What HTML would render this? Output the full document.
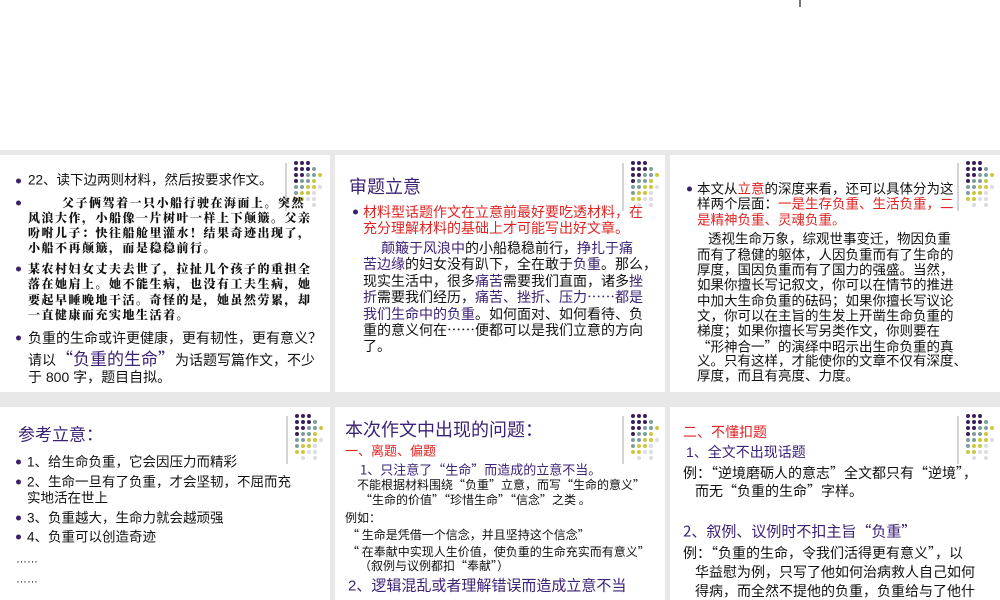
<!DOCTYPE html>
<html><head><meta charset="utf-8"><style>
body{margin:0;width:1000px;height:600px;overflow:hidden;background:#fff;position:relative;font-family:"Liberation Sans","Noto Sans CJK SC",sans-serif;color:#111}
.band{position:absolute;left:0;top:150px;width:1000px;height:450px;background:#e8e8e8}
.s{position:absolute;background:#fff;overflow:hidden}
.l{position:absolute;white-space:nowrap;line-height:1;transform:translateY(-50%)}
.c{font-family:"Noto Sans CJK SC","Liberation Sans",sans-serif}
.b{position:absolute;width:5px;height:5px;border-radius:50%;background:#3a1f6b;transform:translateY(-50%)}
.p{color:#3c2275}.r{color:#e02424}
.m{font-family:"Noto Serif CJK SC","Noto Sans CJK SC",serif;font-weight:900;font-size:12px;letter-spacing:1.5px}
</style></head><body>
<div style="position:absolute;left:799px;top:0;width:2px;height:7px;background:#777"></div>
<div class="band"></div>
<div class="s" style="left:0;top:155px;width:330px;height:237px"></div>
<div class="s" style="left:335px;top:155px;width:330px;height:237px"></div>
<div class="s" style="left:670px;top:155px;width:330px;height:237px"></div>
<div class="s" style="left:0;top:407px;width:330px;height:193px"></div>
<div class="s" style="left:335px;top:407px;width:330px;height:193px"></div>
<div class="s" style="left:670px;top:407px;width:330px;height:193px"></div>

<svg width="1000" height="600" style="position:absolute;left:0;top:0">
<defs><g id="d">
<line x1="-8" y1="2" x2="-8" y2="50" stroke="#aaa" stroke-width="1"/>
<g fill="#3a1f5c"><circle cx="2" cy="2" r="2"/><circle cx="8" cy="2" r="2"/><circle cx="14" cy="2" r="2"/><circle cx="2" cy="8" r="2"/><circle cx="8" cy="8" r="2"/><circle cx="14" cy="8" r="2"/><circle cx="2" cy="14" r="2"/><circle cx="8" cy="14" r="2"/><circle cx="2" cy="20" r="2"/></g>
<g fill="#7d9e9c"><circle cx="20" cy="8" r="2"/><circle cx="14" cy="14" r="2"/><circle cx="20" cy="14" r="2"/><circle cx="8" cy="20" r="2"/><circle cx="14" cy="20" r="2"/><circle cx="2" cy="26" r="2"/><circle cx="8" cy="26" r="2"/><circle cx="2" cy="32" r="2"/></g>
<g fill="#c9c83e"><circle cx="26" cy="14" r="2"/><circle cx="20" cy="20" r="2"/><circle cx="14" cy="26" r="2"/><circle cx="20" cy="26" r="2"/><circle cx="8" cy="32" r="2"/><circle cx="14" cy="32" r="2"/><circle cx="2" cy="38" r="2"/><circle cx="8" cy="38" r="2"/></g>
<g fill="#dcdce4"><circle cx="26" cy="26" r="2"/><circle cx="20" cy="32" r="2"/><circle cx="14" cy="38" r="2"/><circle cx="20" cy="38" r="2"/><circle cx="8" cy="44" r="2"/><circle cx="20" cy="44" r="2"/></g>
</g></defs>
<use href="#d" x="294" y="161"/><use href="#d" x="631" y="161"/><use href="#d" x="966" y="161"/>
<use href="#d" x="295" y="414"/><use href="#d" x="631" y="414"/><use href="#d" x="966" y="414"/>
</svg>

<!-- slide1 -->
<div class="b" style="left:16px;top:181px"></div>
<div class="l" style="left:28px;top:180px;font-size:13.5px">22、读下边两则材料，然后按要求作文。</div>
<div class="b" style="left:16px;top:203px"></div>
<div class="l m" style="left:62px;top:203px">父子俩驾着一只小船行驶在海面上。突然</div>
<div class="l m" style="left:28px;top:218px">风浪大作，小船像一片树叶一样上下颠簸。父亲</div>
<div class="l m" style="left:28px;top:233px">吩咐儿子：快往船舱里灌水！结果奇迹出现了，</div>
<div class="l m" style="left:28px;top:248px">小船不再颠簸，而是稳稳前行。</div>
<div class="b" style="left:16px;top:269px"></div>
<div class="l m" style="left:28px;top:269px">某农村妇女丈夫去世了，拉扯几个孩子的重担全</div>
<div class="l m" style="left:28px;top:284px">落在她肩上。她不能生病，也没有工夫生病，她</div>
<div class="l m" style="left:28px;top:300px">要起早睡晚地干活。奇怪的是，她虽然劳累，却</div>
<div class="l m" style="left:28px;top:315px">一直健康而充实地生活着。</div>
<div class="b" style="left:16px;top:338px"></div>
<div class="l" style="left:28px;top:338px;font-size:14px">负重的生命或许更健康，更有韧性，更有意义？</div>
<div class="l" style="left:28px;top:358px;font-size:14px">请以<span class="p c" style="font-size:17px">“负重的生命”</span>为话题写篇作文，不少</div>
<div class="l" style="left:28px;top:377px;font-size:14px">于 800 字，题目自拟。</div>

<!-- slide2 -->
<div class="l p" style="left:349px;top:187px;font-size:18px">审题立意</div>
<div class="b" style="left:353px;top:212px"></div>
<div class="l r" style="left:363px;top:212px;font-size:14px">材料型话题作文在立意前最好要吃透材料，在</div>
<div class="l r" style="left:363px;top:228px;font-size:14px">充分理解材料的基础上才可能写出好文章。</div>
<div class="l" style="left:381px;top:248px;font-size:14px"><span class="p">颠簸于风浪中</span>的小船稳稳前行，<span class="p">挣扎于痛</span></div>
<div class="l" style="left:363px;top:264px;font-size:14px"><span class="p">苦边缘</span>的妇女没有趴下，全在敢于<span class="p">负重</span>。那么，</div>
<div class="l" style="left:363px;top:281px;font-size:14px">现实生活中，很多<span class="p">痛苦</span>需要我们直面，诸多<span class="p">挫</span></div>
<div class="l c" style="left:363px;top:297px;font-size:14px"><span class="p">折</span>需要我们经历，<span class="p">痛苦、挫折、压力……都是</span></div>
<div class="l" style="left:363px;top:314px;font-size:14px"><span class="p">我们生命中的负重</span>。如何面对、如何看待、负</div>
<div class="l c" style="left:363px;top:330px;font-size:14px">重的意义何在……便都可以是我们立意的方向</div>
<div class="l" style="left:363px;top:346px;font-size:14px">了。</div>

<!-- slide3 -->
<div class="b" style="left:687px;top:189px"></div>
<div class="l" style="left:697px;top:189px;font-size:13.5px">本文从<span class="r">立意</span>的深度来看，还可以具体分为这</div>
<div class="l" style="left:697px;top:204px;font-size:13.5px">样两个层面：<span class="r">一是生存负重、生活负重，二</span></div>
<div class="l r" style="left:697px;top:220px;font-size:13.5px">是精神负重、灵魂负重。</div>
<div class="l" style="left:708px;top:239px;font-size:13.5px">透视生命万象，综观世事变迁，物因负重</div>
<div class="l" style="left:697px;top:255px;font-size:13.5px">而有了稳健的躯体，人因负重而有了生命的</div>
<div class="l" style="left:697px;top:270px;font-size:13.5px">厚度，国因负重而有了国力的强盛。当然，</div>
<div class="l" style="left:697px;top:285px;font-size:13.5px">如果你擅长写记叙文，你可以在情节的推进</div>
<div class="l" style="left:697px;top:301px;font-size:13.5px">中加大生命负重的砝码；如果你擅长写议论</div>
<div class="l" style="left:697px;top:316px;font-size:13.5px">文，你可以在主旨的生发上开凿生命负重的</div>
<div class="l" style="left:697px;top:331px;font-size:13.5px">梯度；如果你擅长写另类作文，你则要在</div>
<div class="l c" style="left:697px;top:346px;font-size:13.5px">“形神合一”的演绎中昭示出生命负重的真</div>
<div class="l" style="left:697px;top:361px;font-size:13.5px">义。只有这样，才能使你的文章不仅有深度、</div>
<div class="l" style="left:697px;top:376px;font-size:13.5px">厚度，而且有亮度、力度。</div>

<!-- slide4 -->
<div class="l p" style="left:18px;top:435px;font-size:17px">参考立意：</div>
<div class="b" style="left:16px;top:462px"></div>
<div class="l" style="left:27px;top:462px;font-size:13.5px">1、给生命负重，它会因压力而精彩</div>
<div class="b" style="left:16px;top:482px"></div>
<div class="l" style="left:27px;top:482px;font-size:13.5px">2、生命一旦有了负重，才会坚韧，不屈而充</div>
<div class="l" style="left:27px;top:498px;font-size:13.5px">实地活在世上</div>
<div class="b" style="left:16px;top:518px"></div>
<div class="l" style="left:27px;top:518px;font-size:13.5px">3、负重越大，生命力就会越顽强</div>
<div class="b" style="left:16px;top:537px"></div>
<div class="l" style="left:27px;top:537px;font-size:13.5px">4、负重可以创造奇迹</div>
<div class="l" style="left:16px;top:560px;font-size:11px">……</div>
<div class="l" style="left:16px;top:580px;font-size:11px">……</div>

<!-- slide5 -->
<div class="l p" style="left:345px;top:430px;font-size:18px">本次作文中出现的问题：</div>
<div class="l r" style="left:345px;top:451px;font-size:13px">一、离题、偏题</div>
<div class="l p c" style="left:360px;top:469px;font-size:13px">1、只注意了“生命”而造成的立意不当。</div>
<div class="l c" style="left:357px;top:485px;font-size:12px">不能根据材料围绕“负重”立意，而写“生命的意义”</div>
<div class="l c" style="left:360px;top:500px;font-size:12px">“生命的价值”“珍惜生命”“信念”之类 。</div>
<div class="l" style="left:345px;top:518px;font-size:12px">例如：</div>
<div class="l c" style="left:347px;top:535px;font-size:12px">“ 生命是凭借一个信念，并且坚持这个信念”</div>
<div class="l c" style="left:347px;top:552px;font-size:12px">“ 在奉献中实现人生价值，使负重的生命充实而有意义”</div>
<div class="l c" style="left:359px;top:566px;font-size:12px">（叙例与议例都扣“奉献”）</div>
<div class="l p" style="left:348px;top:586px;font-size:15px">2、逻辑混乱或者理解错误而造成立意不当</div>

<!-- slide6 -->
<div class="l r" style="left:683px;top:432px;font-size:14px">二、不懂扣题</div>
<div class="l p" style="left:686px;top:452px;font-size:14px">1、全文不出现话题</div>
<div class="l c" style="left:683px;top:473px;font-size:14px">例：“逆境磨砺人的意志”全文都只有“逆境”，</div>
<div class="l c" style="left:695px;top:491px;font-size:14px">而无“负重的生命”字样。</div>
<div class="l p c" style="left:683px;top:531px;font-size:15px">2、叙例、议例时不扣主旨“负重”</div>
<div class="l c" style="left:683px;top:553px;font-size:14px">例：“负重的生命，令我们活得更有意义”，以</div>
<div class="l" style="left:695px;top:572px;font-size:14px">华益慰为例，只写了他如何治病救人自己如何</div>
<div class="l" style="left:695px;top:591px;font-size:14px">得病，而全然不提他的负重，负重给与了他什</div>
</body></html>
